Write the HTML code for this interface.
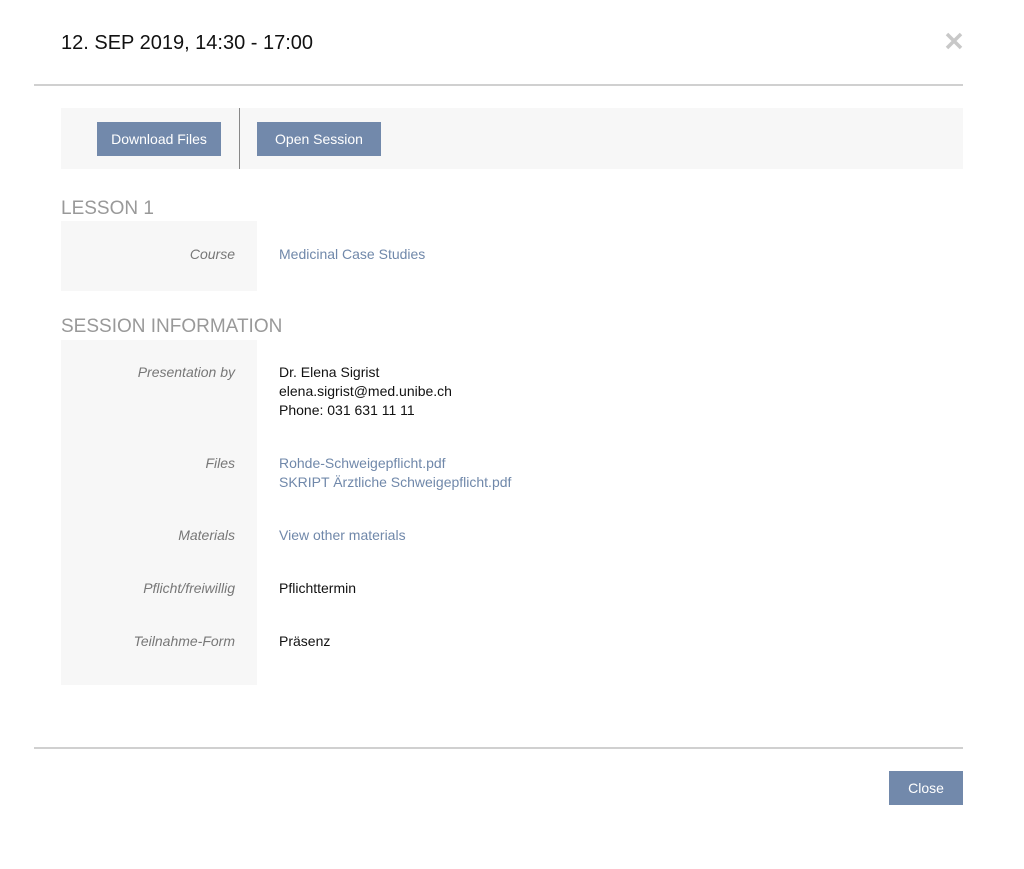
<!DOCTYPE html>
<html><head><meta charset="utf-8"><style>
*{margin:0;padding:0;box-sizing:border-box}
body{width:1024px;height:869px;background:#fff;font-family:"Liberation Sans",sans-serif;position:relative;overflow:hidden;color:#111}
.a{position:absolute}
.t{font-size:14px;line-height:19px;white-space:nowrap}
.lbl{font-style:italic;color:#777;text-align:right;width:174px;left:61px}
.v{left:279px}
.lnk{color:#7088aa}
.btn{background:#7289ab;color:#fff;font-size:14px;text-align:center;line-height:35px;height:34px}
.h{font-size:19px;color:#999;left:61px}
.hr{height:2px;background:#d0d0d0;left:34px;width:929px}
.bg{background:#f7f7f7}
</style></head><body>
<div class="a" style="left:61px;top:31px;font-size:20px;line-height:24px;color:#111">12. SEP 2019, 14:30 - 17:00</div>
<svg class="a" style="left:945px;top:32px" width="18" height="18" viewBox="0 0 18 18"><path d="M2 2L16 16M16 2L2 16" stroke="#c8c8c8" stroke-width="3.5"/></svg>
<div class="a hr" style="top:84px"></div>
<div class="a bg" style="left:61px;top:108px;width:902px;height:61px"></div>
<div class="a" style="left:239px;top:108px;width:1px;height:61px;background:#888"></div>
<div class="a btn" style="left:97px;top:122px;width:124px">Download Files</div>
<div class="a btn" style="left:257px;top:122px;width:124px">Open Session</div>
<div class="a h" style="top:198px">LESSON 1</div>
<div class="a bg" style="left:61px;top:221px;width:196px;height:70px"></div>
<div class="a t lbl" style="top:245px">Course</div>
<div class="a t v lnk" style="top:245px">Medicinal Case Studies</div>
<div class="a h" style="top:316px">SESSION INFORMATION</div>
<div class="a bg" style="left:61px;top:340px;width:196px;height:345px"></div>
<div class="a t lbl" style="top:363px">Presentation by</div>
<div class="a t v" style="top:363px">Dr. Elena Sigrist<br>elena.sigrist@med.unibe.ch<br>Phone: 031 631 11 11</div>
<div class="a t lbl" style="top:454px">Files</div>
<div class="a t v lnk" style="top:454px">Rohde-Schweigepflicht.pdf<br>SKRIPT Ärztliche Schweigepflicht.pdf</div>
<div class="a t lbl" style="top:526px">Materials</div>
<div class="a t v lnk" style="top:526px">View other materials</div>
<div class="a t lbl" style="top:579px">Pflicht/freiwillig</div>
<div class="a t v" style="top:579px">Pflichttermin</div>
<div class="a t lbl" style="top:632px">Teilnahme-Form</div>
<div class="a t v" style="top:632px">Präsenz</div>
<div class="a hr" style="top:747px"></div>
<div class="a btn" style="left:889px;top:771px;width:74px">Close</div>
</body></html>
